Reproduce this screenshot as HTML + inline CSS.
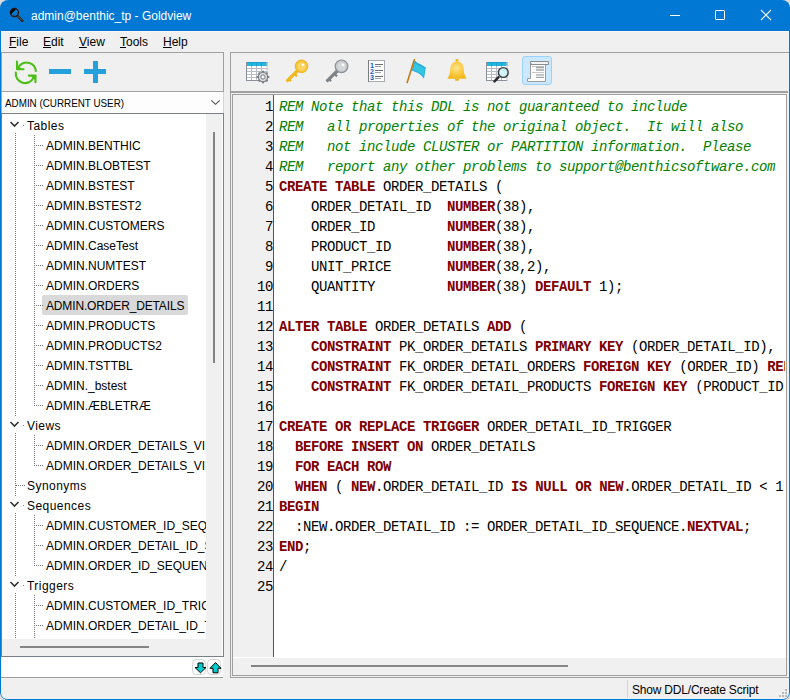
<!DOCTYPE html>
<html><head><meta charset="utf-8">
<style>
html,body{margin:0;padding:0;}
body{width:790px;height:700px;overflow:hidden;position:relative;background:#dcdcdc;font-family:"Liberation Sans",sans-serif;}
.a{position:absolute;}
#win{position:absolute;left:0;top:0;width:790px;height:700px;background:#0078d4;border-radius:8px 8px 8px 8px;overflow:hidden;}
#client{position:absolute;left:1px;top:31px;width:788px;height:668px;background:#f0f0f0;border-radius:0 0 6px 6px;}
#title{position:absolute;left:31px;top:8px;color:#fff;font-size:12px;line-height:16px;white-space:nowrap;}
.menu{position:absolute;top:34px;font-size:12px;line-height:16px;color:#000;white-space:nowrap;}
.menu u{text-decoration:underline;text-decoration-thickness:1px;text-underline-offset:1px;}
.tr{position:absolute;font-size:12px;letter-spacing:0px;line-height:20px;height:20px;color:#000;white-space:nowrap;}
.sel{position:absolute;left:42px;width:146px;height:20px;background:#d9d9d9;border-radius:2px;}
.cl{position:absolute;left:279px;font-family:"Liberation Mono",monospace;font-size:14px;letter-spacing:-0.4px;line-height:20px;height:20px;white-space:pre;color:#000;}
.cl b{color:#800000;font-weight:bold;}
.cm{color:#008000;font-style:italic;}
.ln{position:absolute;left:233px;width:40px;text-align:right;font-family:"Liberation Mono",monospace;font-size:14px;letter-spacing:-0.4px;line-height:20px;color:#000;}
</style></head><body>
<div id="win">
  <!-- title icon -->
  <svg class="a" style="left:9px;top:7px" width="16" height="16" viewBox="0 0 16 16">
    <circle cx="5.4" cy="5.6" r="4" fill="none" stroke="#2a1a10" stroke-width="1.5"/>
    <path d="M2 7.2 A3.7 3.7 0 0 1 7 2.2 Z" fill="#000"/>
    <path d="M8.6 9 L13.4 13.8" stroke="#2a1a10" stroke-width="2.4" stroke-linecap="round"/>
    <path d="M8.8 9.2 L13.2 13.6" stroke="#8a7a6a" stroke-width="0.7"/>
  </svg>
  <div id="title">admin@benthic_tp - Goldview</div>
  <!-- window controls -->
  <div class="a" style="left:670px;top:15px;width:10px;height:1px;background:#fff"></div>
  <div class="a" style="left:715px;top:10px;width:8px;height:8px;border:1px solid #fff;border-radius:1px"></div>
  <svg class="a" style="left:760px;top:9px" width="12" height="12" viewBox="0 0 12 12">
    <path d="M1 1 L11 11 M11 1 L1 11" stroke="#fff" stroke-width="1.1"/>
  </svg>

  <div id="client"></div>
  <!-- menu -->
  <div class="a" style="left:1px;top:31px;width:788px;height:1px;background:#fbf7f2"></div>
  <div class="menu" style="left:9px"><u>F</u>ile</div>
  <div class="menu" style="left:43px"><u>E</u>dit</div>
  <div class="menu" style="left:79px"><u>V</u>iew</div>
  <div class="menu" style="left:120px"><u>T</u>ools</div>
  <div class="menu" style="left:163px"><u>H</u>elp</div>

  <!-- LEFT PANEL -->
  <div class="a" style="left:1px;top:52px;width:221px;height:38px;border:1px solid #a0a0a0;border-left-color:#a0a0a0;"></div>
  <!-- refresh icon -->
  <svg class="a" style="left:13px;top:59px" width="26" height="26" viewBox="0 0 26 26">
    <g fill="none" stroke="#4cbf16" stroke-width="2.1" stroke-linecap="round" stroke-linejoin="round">
    <path d="M6.5 6.8 A9.3 9.3 0 0 1 22.8 12"/>
    <path d="M2.8 13.6 A9.3 9.3 0 0 0 20.5 18.6"/>
    <path d="M4 2.6 L4 10.3 L10.6 10.3"/>
    <path d="M22.5 23.3 L22.5 16.6 L15.8 16.6"/>
    </g>
    <path d="M4 5 L4 10.3 L9 10.3 Z" fill="#4cbf16"/>
    <path d="M22.5 21.5 L22.5 16.6 L17.5 16.6 Z" fill="#4cbf16"/>
  </svg>
  <div class="a" style="left:49px;top:69px;width:22px;height:5px;background:#26a0da"></div>
  <div class="a" style="left:84px;top:69px;width:22px;height:5px;background:#26a0da"></div>
  <div class="a" style="left:93px;top:61px;width:5px;height:22px;background:#26a0da"></div>

  <!-- dropdown -->
  <div class="a" style="left:1px;top:92px;width:222px;height:21px;background:#fdfdfd"></div>
  <div class="a" style="left:223px;top:92px;width:1px;height:21px;background:#d5d5d5"></div>
  <div class="a" style="left:1px;top:92px;width:1px;height:21px;background:#a8a8a8"></div>
  <div class="a" style="left:5px;top:96px;font-size:11px;transform:scaleX(0.895);transform-origin:0 0;line-height:14px;color:#000;white-space:nowrap">ADMIN (CURRENT USER)</div>
  <svg class="a" style="left:210px;top:99px" width="12" height="8" viewBox="0 0 12 8">
    <path d="M1.3 1.3 L5.5 5.3 L9.7 1.3" fill="none" stroke="#505050" stroke-width="1.1"/>
  </svg>

  <!-- tree -->
  <div class="a" style="left:1px;top:113px;width:221px;height:542px;border:1px solid #7a7f8a;background:#fff"></div>
  <div class="a" style="left:2px;top:114px;width:204px;height:525px;overflow:hidden">
    <div class="a" style="left:-2px;top:-114px;width:800px;height:800px">
<div class="tr" style="top:116px;left:27px;letter-spacing:0.45px">Tables</div>
<div class="tr" style="top:136px;left:46px">ADMIN.BENTHIC</div>
<div class="tr" style="top:156px;left:46px">ADMIN.BLOBTEST</div>
<div class="tr" style="top:176px;left:46px">ADMIN.BSTEST</div>
<div class="tr" style="top:196px;left:46px">ADMIN.BSTEST2</div>
<div class="tr" style="top:216px;left:46px">ADMIN.CUSTOMERS</div>
<div class="tr" style="top:236px;left:46px">ADMIN.CaseTest</div>
<div class="tr" style="top:256px;left:46px">ADMIN.NUMTEST</div>
<div class="tr" style="top:276px;left:46px">ADMIN.ORDERS</div>
<div class="sel" style="top:295px"></div>
<div class="tr" style="top:296px;left:46px;letter-spacing:-0.15px">ADMIN.ORDER_DETAILS</div>
<div class="tr" style="top:316px;left:46px">ADMIN.PRODUCTS</div>
<div class="tr" style="top:336px;left:46px">ADMIN.PRODUCTS2</div>
<div class="tr" style="top:356px;left:46px">ADMIN.TSTTBL</div>
<div class="tr" style="top:376px;left:46px">ADMIN._bstest</div>
<div class="tr" style="top:396px;left:46px">ADMIN.ÆBLETRÆ</div>
<div class="tr" style="top:416px;left:27px;letter-spacing:0.45px">Views</div>
<div class="tr" style="top:436px;left:46px">ADMIN.ORDER_DETAILS_VIEW</div>
<div class="tr" style="top:456px;left:46px">ADMIN.ORDER_DETAILS_VIEW2</div>
<div class="tr" style="top:476px;left:27px;letter-spacing:0.45px">Synonyms</div>
<div class="tr" style="top:496px;left:27px;letter-spacing:0.45px">Sequences</div>
<div class="tr" style="top:516px;left:46px">ADMIN.CUSTOMER_ID_SEQUENCE</div>
<div class="tr" style="top:536px;left:46px">ADMIN.ORDER_DETAIL_ID_SEQUENCE</div>
<div class="tr" style="top:556px;left:46px">ADMIN.ORDER_ID_SEQUENCE</div>
<div class="tr" style="top:576px;left:27px;letter-spacing:0.45px">Triggers</div>
<div class="tr" style="top:596px;left:46px">ADMIN.CUSTOMER_ID_TRIGGER</div>
<div class="tr" style="top:616px;left:46px">ADMIN.ORDER_DETAIL_ID_TRIGGER</div>
      <svg class="a" style="left:0;top:0" width="300" height="700">
        <g stroke="#7a7a7a" stroke-width="1" stroke-dasharray="1 1" fill="none">
<line x1="15.5" y1="133" x2="15.5" y2="416"/>
<line x1="15.5" y1="433" x2="15.5" y2="496"/>
<line x1="15.5" y1="513" x2="15.5" y2="576"/>
<line x1="15.5" y1="593" x2="15.5" y2="640"/>
<line x1="34.5" y1="135" x2="34.5" y2="406"/>
<line x1="34.5" y1="435" x2="34.5" y2="466"/>
<line x1="34.5" y1="515" x2="34.5" y2="566"/>
<line x1="34.5" y1="595" x2="34.5" y2="640"/>
<line x1="36" y1="145.5" x2="44" y2="145.5"/>
<line x1="36" y1="165.5" x2="44" y2="165.5"/>
<line x1="36" y1="185.5" x2="44" y2="185.5"/>
<line x1="36" y1="205.5" x2="44" y2="205.5"/>
<line x1="36" y1="225.5" x2="44" y2="225.5"/>
<line x1="36" y1="245.5" x2="44" y2="245.5"/>
<line x1="36" y1="265.5" x2="44" y2="265.5"/>
<line x1="36" y1="285.5" x2="44" y2="285.5"/>
<line x1="36" y1="305.5" x2="44" y2="305.5"/>
<line x1="36" y1="325.5" x2="44" y2="325.5"/>
<line x1="36" y1="345.5" x2="44" y2="345.5"/>
<line x1="36" y1="365.5" x2="44" y2="365.5"/>
<line x1="36" y1="385.5" x2="44" y2="385.5"/>
<line x1="36" y1="405.5" x2="44" y2="405.5"/>
<line x1="36" y1="445.5" x2="44" y2="445.5"/>
<line x1="36" y1="465.5" x2="44" y2="465.5"/>
<line x1="36" y1="525.5" x2="44" y2="525.5"/>
<line x1="36" y1="545.5" x2="44" y2="545.5"/>
<line x1="36" y1="565.5" x2="44" y2="565.5"/>
<line x1="36" y1="605.5" x2="44" y2="605.5"/>
<line x1="36" y1="625.5" x2="44" y2="625.5"/>
<line x1="16" y1="485.5" x2="25" y2="485.5"/>
        </g>
        <g stroke="#333" stroke-width="1.6" fill="none">
<path d="M10.5 122.0 L14.5 126.0 L18.5 122.0" />
<rect x="23" y="125" width="1" height="1" fill="#808080" stroke="none"/>
<path d="M10.5 422.0 L14.5 426.0 L18.5 422.0" />
<rect x="23" y="425" width="1" height="1" fill="#808080" stroke="none"/>
<path d="M10.5 502.0 L14.5 506.0 L18.5 502.0" />
<rect x="23" y="505" width="1" height="1" fill="#808080" stroke="none"/>
<path d="M10.5 582.0 L14.5 586.0 L18.5 582.0" />
<rect x="23" y="585" width="1" height="1" fill="#808080" stroke="none"/>
        </g>
      </svg>
    </div>
  </div>
  <!-- tree vscroll -->
  <div class="a" style="left:206px;top:114px;width:16px;height:542px;background:#f0f0f0"></div>
  <div class="a" style="left:213px;top:132px;width:2px;height:231px;background:#858585"></div>
  <!-- tree hscroll -->
  <div class="a" style="left:2px;top:639px;width:220px;height:17px;background:#f0f0f0"></div>
  <div class="a" style="left:20px;top:646px;width:129px;height:2px;background:#858585"></div>

  <!-- bottom buttons panel -->
  <div class="a" style="left:1px;top:657px;width:222px;height:20px;background:#fff"></div>
  <div class="a" style="left:1px;top:677px;width:222px;height:1px;background:#a0a0a0"></div>
  <div class="a" style="left:192px;top:659px;width:12px;height:14px;background:#fdfdfd;border:1px solid #d6d6d6;border-radius:4px"></div>
  <div class="a" style="left:207px;top:659px;width:12px;height:14px;background:#fdfdfd;border:1px solid #d6d6d6;border-radius:4px"></div>
  <svg class="a" style="left:193px;top:660px" width="14" height="14" viewBox="0 0 14 14">
    <path d="M5 3 H10 V7.5 H13 L7.5 12.8 L2 7.5 H5 Z" fill="#00cece" stroke="#000" stroke-width="1" stroke-linejoin="miter"/>
  </svg>
  <svg class="a" style="left:208px;top:660px" width="14" height="14" viewBox="0 0 14 14">
    <path d="M7.5 2.6 L13 8.3 H10 V12.8 H5 V8.3 H2 Z" fill="#00cece" stroke="#000" stroke-width="1" stroke-linejoin="miter"/>
  </svg>

  <!-- RIGHT PANEL -->
  <div class="a" style="left:230px;top:52px;width:558px;height:624px;border-left:1px solid #a0a0a0;border-top:1px solid #a0a0a0;border-bottom:1px solid #a0a0a0"></div>
  <div class="a" style="left:231px;top:91px;width:557px;height:2px;background:#a0a0a0"></div>
  <!-- toolbar icons -->
  <div id="icons">
  <!-- table gear -->
  <svg class="a" style="left:245px;top:61px" width="26" height="24" viewBox="0 0 26 24">
    <rect x="1" y="1" width="21.5" height="19" fill="#fff"/>
    <rect x="1" y="1" width="21.5" height="4" fill="#25b8dc"/>
    <path d="M1 7.5H22.5M1 10.5H22.5M1 13.5H22.5M1 16.5H22.5M6.5 1V20M11.5 1V20M16.5 1V20" stroke="#b8bcc2" stroke-width="1"/>
    <path d="M6.5 1V5M11.5 1V5M16.5 1V5M1 1.5H22.5" stroke="#1aa0d0" stroke-width="1"/>
    <path d="M1.5 1V20M1 19.5H22.5" stroke="#8a9097" stroke-width="1"/>
    <path d="M22 1V20" stroke="#c0c4c8" stroke-width="1"/>
    <g transform="translate(18,16)">
      <g fill="#74787c"><rect x="-0.9" y="-6.3" width="1.8" height="2" transform="rotate(0)"/><rect x="-0.9" y="-6.3" width="1.8" height="2" transform="rotate(45)"/><rect x="-0.9" y="-6.3" width="1.8" height="2" transform="rotate(90)"/><rect x="-0.9" y="-6.3" width="1.8" height="2" transform="rotate(135)"/><rect x="-0.9" y="-6.3" width="1.8" height="2" transform="rotate(180)"/><rect x="-0.9" y="-6.3" width="1.8" height="2" transform="rotate(225)"/><rect x="-0.9" y="-6.3" width="1.8" height="2" transform="rotate(270)"/><rect x="-0.9" y="-6.3" width="1.8" height="2" transform="rotate(315)"/></g>
      <circle r="4.7" fill="#dcdee0" stroke="#74787c" stroke-width="1.1"/>
      <circle r="2.2" fill="#f6f6f6" stroke="#74787c" stroke-width="1"/>
    </g>
  </svg>
  <!-- gold key -->
  <svg class="a" style="left:285px;top:59px" width="24" height="25" viewBox="0 0 24 25">
    <path d="M11.5 10.5 L0.6 21.6 L2.4 23.4 L4 21.8 L5.2 23 L6.8 21.4 L5.8 20.4 L9.6 16.6 L11.2 18.2 L12.8 16.6 L11.4 15.2 L14 12.6 Z" fill="#f0b81c"/>
    <path d="M12.5 11.5 L2 22" stroke="#f0b81c" stroke-width="2.6"/>
    <circle cx="16.5" cy="7.3" r="6.3" fill="#f7c53a" stroke="#efb41e" stroke-width="1"/>
    <circle cx="16.7" cy="7.6" r="4.2" fill="#fad463"/>
    <circle cx="18" cy="5.8" r="1.4" fill="#ffffff"/>
  </svg>
  <!-- gray key -->
  <svg class="a" style="left:325px;top:59px" width="24" height="25" viewBox="0 0 24 25">
    <path d="M11.5 10.5 L0.6 21.6 L2.4 23.4 L4 21.8 L5.2 23 L6.8 21.4 L5.8 20.4 L9.6 16.6 L11.2 18.2 L12.8 16.6 L11.4 15.2 L14 12.6 Z" fill="#7e8388"/>
    <path d="M12.5 11.5 L2 22" stroke="#7e8388" stroke-width="2.6"/>
    <circle cx="16.5" cy="7.3" r="6.3" fill="#c8cacc" stroke="#8c9094" stroke-width="1.2"/>
    <circle cx="16.7" cy="7.6" r="4" fill="#d6d8da"/>
    <circle cx="18" cy="5.8" r="1.4" fill="#ffffff"/>
  </svg>
  <!-- numbered list -->
  <svg class="a" style="left:368px;top:60px" width="18" height="23" viewBox="0 0 18 23">
    <rect x="0.5" y="0.5" width="16" height="21" fill="#fff" stroke="#a8acb2" stroke-width="1"/>
    <path d="M0.5 0V22" stroke="#7a7f86" stroke-width="1"/>
    <g font-family="Liberation Sans" font-weight="bold" font-size="7.2" fill="#0a5cc0"><text x="2" y="7.8">1</text><text x="2" y="13.6">2</text><text x="2" y="19.5">3</text></g>
    <path d="M7 4.5H15M7 10.5H15M7 16.5H15" stroke="#6b7075" stroke-width="1"/>
    <path d="M7 6.5H13M7 12.5H13M7 18.5H13" stroke="#a0a4a8" stroke-width="1"/>
  </svg>
  <!-- flag -->
  <svg class="a" style="left:405px;top:58px" width="22" height="26" viewBox="0 0 22 26">
    <path d="M9.6 2.5 Q12 5 15 6 Q18 7.5 20.8 9.5 L19 20.5 Q17 17 13 15 Q10 13.5 6.8 12.5 Z" fill="#22ace0"/>
    <path d="M10 5 Q13 7 16 8.5 Q18.5 10 19.8 11 L18.6 18 Q16 15 12 13.5 Q9.5 12.5 7.8 12 Z" fill="#35c6e2"/>
    <path d="M9.3 1.8 L2.2 24.4" stroke="#c47812" stroke-width="1.6" stroke-linecap="round"/>
  </svg>
  <!-- bell -->
  <svg class="a" style="left:446px;top:58px" width="22" height="25" viewBox="0 0 22 25">
    <defs><radialGradient id="bg1" cx="0.47" cy="0.38" r="0.6"><stop offset="0" stop-color="#fde38e"/><stop offset="0.55" stop-color="#f9cc48"/><stop offset="1" stop-color="#f3b81e"/></radialGradient></defs>
    <rect x="9.5" y="1" width="3" height="3" rx="1" fill="#f4ba22"/>
    <path d="M11 3.4 C6.8 3.4 4.6 6.5 4.3 10.5 L4 14 C3.8 16.5 2.6 18.5 1.4 20.8 L20.6 20.8 C19.4 18.5 18.2 16.5 18 14 L17.7 10.5 C17.4 6.5 15.2 3.4 11 3.4 Z" fill="url(#bg1)"/>
    <path d="M8.8 20.8 L9.4 22.8 L12.6 22.8 L13.2 20.8 Z" fill="#eeb418"/>
  </svg>
  <!-- table search -->
  <svg class="a" style="left:485px;top:61px" width="26" height="24" viewBox="0 0 26 24">
    <rect x="1" y="1" width="21.5" height="19" fill="#fff"/>
    <rect x="1" y="1" width="21.5" height="4" fill="#25b8dc"/>
    <path d="M1 7.5H22.5M1 10.5H22.5M1 13.5H22.5M1 16.5H22.5M6.5 1V20M11.5 1V20M16.5 1V20" stroke="#b8bcc2" stroke-width="1"/>
    <path d="M6.5 1V5M11.5 1V5M16.5 1V5M1 1.5H22.5" stroke="#1aa0d0" stroke-width="1"/>
    <path d="M1.5 1V20M1 19.5H22.5" stroke="#8a9097" stroke-width="1"/>
    <path d="M22 1V20" stroke="#c0c4c8" stroke-width="1"/>
    <circle cx="18.3" cy="11.5" r="4.9" fill="#c8f2f8" stroke="#38393b" stroke-width="1.4"/>
    <path d="M15.5 9.5 L20 14" stroke="#e8fcff" stroke-width="1.2"/>
    <path d="M13.3 16.3 L9.5 20.3" stroke="#2a2b2d" stroke-width="2.6" stroke-linecap="round"/>
  </svg>
  <!-- selected scroll button -->
  <div class="a" style="left:522px;top:56px;width:28px;height:27px;background:#cce8ff;border:1px solid #99d1ff;border-radius:3px"></div>
  <svg class="a" style="left:526px;top:60px" width="24" height="23" viewBox="0 0 24 23">
    <path d="M4.5 2.5 L4.5 18.5 L1.5 18.5 L1.5 21.5 L19.5 21.5 L19.5 4.5" fill="#fdfdfd" stroke="#9a9c9e" stroke-width="1"/>
    <path d="M4.5 1.5 L22.5 1.5 L22.5 4.5 L6.5 4.5 Q5 4.5 4.5 3 Z" fill="#f4f4f4" stroke="#8a8c8e" stroke-width="1"/>
    <path d="M4.5 4.5 L19.5 4.5" stroke="#8a8c8e" stroke-width="1"/>
    <rect x="5" y="5" width="14" height="16" fill="#fdfdfd"/>
    <path d="M6 6.5H18M6 12.5H18" stroke="#c4c6c8" stroke-width="1"/>
    <path d="M10 7.5H18M10 10H18M10 14.8H18M10 17.3H18" stroke="#a4a6a8" stroke-width="1.3"/>
  </svg>
  </div>

  <!-- editor -->
  <div class="a" style="left:232px;top:94px;width:553px;height:580px;border:1px solid #a0a0a0;background:#fff"></div>
  <div class="a" style="left:233px;top:95px;width:40px;height:562px;background:#f0f0f0"></div>
  <div class="a" style="left:273px;top:95px;width:1px;height:562px;background:#555"></div>
  <div class="a" style="left:233px;top:658px;width:553px;height:17px;background:#f0f0f0"></div>
  <div class="a" style="left:251px;top:665px;width:317px;height:2px;background:#858585"></div>
  <div class="a" style="left:274px;top:95px;width:511px;height:563px;overflow:hidden">
    <div class="a" style="left:-274px;top:-95px;width:1200px;height:700px">
<div class="cl cm" style="top:97px">REM Note that this DDL is not guaranteed to include</div>
<div class="cl cm" style="top:117px">REM   all properties of the original object.  It will also</div>
<div class="cl cm" style="top:137px">REM   not include CLUSTER or PARTITION information.  Please</div>
<div class="cl cm" style="top:157px">REM   report any other problems to support@benthicsoftware.com</div>
<div class="cl" style="top:177px"><b>CREATE</b> <b>TABLE</b> ORDER_DETAILS (</div>
<div class="cl" style="top:197px">    ORDER_DETAIL_ID  <b>NUMBER</b>(38),</div>
<div class="cl" style="top:217px">    ORDER_ID         <b>NUMBER</b>(38),</div>
<div class="cl" style="top:237px">    PRODUCT_ID       <b>NUMBER</b>(38),</div>
<div class="cl" style="top:257px">    UNIT_PRICE       <b>NUMBER</b>(38,2),</div>
<div class="cl" style="top:277px">    QUANTITY         <b>NUMBER</b>(38) <b>DEFAULT</b> 1);</div>
<div class="cl" style="top:297px"></div>
<div class="cl" style="top:317px"><b>ALTER</b> <b>TABLE</b> ORDER_DETAILS <b>ADD</b> (</div>
<div class="cl" style="top:337px">    <b>CONSTRAINT</b> PK_ORDER_DETAILS <b>PRIMARY</b> <b>KEY</b> (ORDER_DETAIL_ID),</div>
<div class="cl" style="top:357px">    <b>CONSTRAINT</b> FK_ORDER_DETAIL_ORDERS <b>FOREIGN</b> <b>KEY</b> (ORDER_ID) <b>REFERENCES</b> ORDERS (ORDER_ID),</div>
<div class="cl" style="top:377px">    <b>CONSTRAINT</b> FK_ORDER_DETAIL_PRODUCTS <b>FOREIGN</b> <b>KEY</b> (PRODUCT_ID) <b>REFERENCES</b> PRODUCTS (PRODUCT_ID));</div>
<div class="cl" style="top:397px"></div>
<div class="cl" style="top:417px"><b>CREATE</b> <b>OR</b> <b>REPLACE</b> <b>TRIGGER</b> ORDER_DETAIL_ID_TRIGGER</div>
<div class="cl" style="top:437px">  <b>BEFORE</b> <b>INSERT</b> <b>ON</b> ORDER_DETAILS</div>
<div class="cl" style="top:457px">  <b>FOR</b> <b>EACH</b> <b>ROW</b></div>
<div class="cl" style="top:477px">  <b>WHEN</b> ( <b>NEW</b>.ORDER_DETAIL_ID <b>IS</b> <b>NULL</b> <b>OR</b> <b>NEW</b>.ORDER_DETAIL_ID &lt; 1 )</div>
<div class="cl" style="top:497px"><b>BEGIN</b></div>
<div class="cl" style="top:517px">  :NEW.ORDER_DETAIL_ID := ORDER_DETAIL_ID_SEQUENCE.<b>NEXTVAL</b>;</div>
<div class="cl" style="top:537px"><b>END</b>;</div>
<div class="cl" style="top:557px">/</div>
<div class="cl" style="top:577px"></div>
    </div>
  </div>
  <div class="a" style="left:233px;top:95px;width:40px;height:563px;overflow:hidden">
    <div class="a" style="left:-233px;top:-95px;width:800px;height:700px">
<div class="ln" style="top:97px">1</div>
<div class="ln" style="top:117px">2</div>
<div class="ln" style="top:137px">3</div>
<div class="ln" style="top:157px">4</div>
<div class="ln" style="top:177px">5</div>
<div class="ln" style="top:197px">6</div>
<div class="ln" style="top:217px">7</div>
<div class="ln" style="top:237px">8</div>
<div class="ln" style="top:257px">9</div>
<div class="ln" style="top:277px">10</div>
<div class="ln" style="top:297px">11</div>
<div class="ln" style="top:317px">12</div>
<div class="ln" style="top:337px">13</div>
<div class="ln" style="top:357px">14</div>
<div class="ln" style="top:377px">15</div>
<div class="ln" style="top:397px">16</div>
<div class="ln" style="top:417px">17</div>
<div class="ln" style="top:437px">18</div>
<div class="ln" style="top:457px">19</div>
<div class="ln" style="top:477px">20</div>
<div class="ln" style="top:497px">21</div>
<div class="ln" style="top:517px">22</div>
<div class="ln" style="top:537px">23</div>
<div class="ln" style="top:557px">24</div>
<div class="ln" style="top:577px">25</div>
    </div>
  </div>

  <!-- status bar -->
  <div class="a" style="left:627px;top:680px;width:1px;height:18px;background:#d4d4d4"></div>
  <div class="a" style="left:632px;top:682px;font-size:12px;letter-spacing:-0.2px;line-height:16px;color:#000;white-space:nowrap">Show DDL/Create Script</div>
  <svg class="a" style="left:777px;top:688px" width="12" height="12" viewBox="0 0 12 12">
    <g fill="#b8b8b8"><rect x="8" y="1" width="2" height="2"/><rect x="5" y="4" width="2" height="2"/><rect x="8" y="4" width="2" height="2"/><rect x="2" y="7" width="2" height="2"/><rect x="5" y="7" width="2" height="2"/><rect x="8" y="7" width="2" height="2"/></g>
  </svg>
</div>
</body></html>
